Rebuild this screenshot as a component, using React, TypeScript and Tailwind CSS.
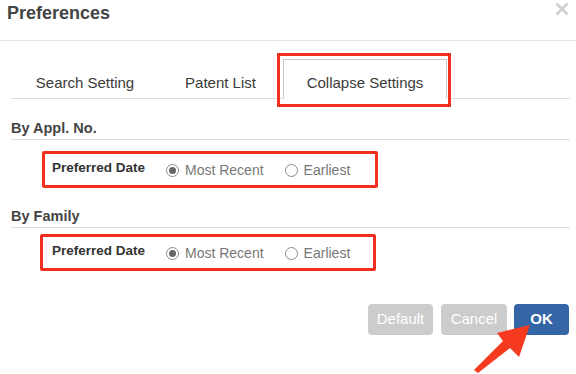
import { useState } from "react";

const FONT = "font-['Liberation_Sans',Arial,Helvetica,sans-serif]";

function Radio({ checked }: { checked: boolean }) {
  return (
    <span className="flex h-[13px] w-[13px] items-center justify-center rounded-full border border-[#8a8a8a] bg-white">
      {checked && <span className="h-[7px] w-[7px] rounded-full bg-[#666]" />}
    </span>
  );
}

function DateRow({
  value,
  onChange,
  className,
}: {
  value: "recent" | "earliest";
  onChange: (v: "recent" | "earliest") => void;
  className: string;
}) {
  return (
    <div
      className={`flex h-[37px] w-[336px] items-center rounded-[2px] border-[3px] border-[#f3301d] ${className}`}
    >
      <span className="mt-[-2px] w-[114px] text-[13.5px] font-bold text-[#333]">
        Preferred Date
      </span>
      <button
        type="button"
        className="mt-[2px] flex items-center gap-[6px]"
        onClick={() => onChange("recent")}
      >
        <Radio checked={value === "recent"} />
        <span className="text-[14px] text-[#777]">Most Recent</span>
      </button>
      <button
        type="button"
        className="ml-[21px] mt-[2px] flex items-center gap-[6px]"
        onClick={() => onChange("earliest")}
      >
        <Radio checked={value === "earliest"} />
        <span className="text-[14px] text-[#777]">Earliest</span>
      </button>
    </div>
  );
}

export default function App() {
  const [tab, setTab] = useState(2);
  const [byAppl, setByAppl] = useState<"recent" | "earliest">("recent");
  const [byFamily, setByFamily] = useState<"recent" | "earliest">("recent");

  const tabs = [
    { label: "Search Setting", w: "w-[144px] ml-[2px]" },
    { label: "Patent List", w: "w-[117px] ml-[5px]" },
    { label: "Collapse Settings", w: "w-[164px] ml-[4px]" },
  ];

  return (
    <div className={`relative h-[374px] w-[576px] overflow-hidden bg-white ${FONT}`}>
      {/* header */}
      <div className="flex h-[41px] items-start justify-between border-b border-[#e5e5e5] pl-[7px] pr-[7px]">
        <h1 className="mt-[2px] text-[18px] font-bold leading-[22px] text-[#444]">
          Preferences
        </h1>
        <button type="button" aria-label="Close" className="mt-[2px]">
          <svg width="14" height="14" viewBox="0 0 14 14">
            <path d="M1.5 1.5 L12.5 12.5 M12.5 1.5 L1.5 12.5" stroke="#cfcfcf" strokeWidth="2.6" />
          </svg>
        </button>
      </div>

      <div className="pl-[11px] pr-[6px]">
        {/* tabs */}
        <div className="mt-[18px] flex h-[40px] border-b border-[#ddd]">
          {tabs.map((t, i) => (
            <button
              key={t.label}
              type="button"
              onClick={() => setTab(i)}
              className={`relative -mb-px h-[40px] pt-[8px] text-center text-[15px] leading-[18px] text-[#3a3a3a] ${t.w} ${
                tab === i ? "border border-b-white border-[#c8c8c8] bg-white" : "border border-transparent"
              }`}
            >
              {t.label}
              {i === 2 && (
                <span className="pointer-events-none absolute -left-[7px] -right-[5px] -top-[7px] -bottom-[9px] border-[3px] border-[#f3301d]" />
              )}
            </button>
          ))}
        </div>

        {/* By Appl. No. */}
        <h2 className="mt-[21px] border-b border-[#ddd] pb-[2px] text-[14.5px] font-bold leading-[17px] text-[#444]">
          By Appl. No.
        </h2>
        <DateRow value={byAppl} onChange={setByAppl} className="ml-[31px] mt-[11px] pl-[7px]" />

        {/* By Family */}
        <h2 className="mt-[20px] border-b border-[#ddd] pb-[2px] text-[14.5px] font-bold leading-[17px] text-[#444]">
          By Family
        </h2>
        <DateRow value={byFamily} onChange={setByFamily} className="ml-[29px] mt-[6px] pl-[9px]" />

        {/* footer buttons */}
        <div className="mr-[1px] mt-[33px] flex justify-end">
          <button type="button" className="h-[31px] w-[65px] rounded-[4px] bg-[#cccccc] text-[15px] text-white">
            Default
          </button>
          <button type="button" className="ml-[8px] h-[31px] w-[66px] rounded-[4px] bg-[#cccccc] text-[15px] text-white">
            Cancel
          </button>
          <button type="button" className="ml-[7px] h-[31px] w-[55px] rounded-[4px] bg-[#3466a6] text-[15px] font-bold text-white">
            OK
          </button>
        </div>
      </div>

      {/* annotation arrow */}
      <svg className="pointer-events-none absolute left-0 top-0" width="576" height="374" viewBox="0 0 576 374">
        <polygon
          points="530,325 519,357 510,348 478,373 474,370 503,341 497,333"
          fill="#f53a1f"
        />
      </svg>
    </div>
  );
}
